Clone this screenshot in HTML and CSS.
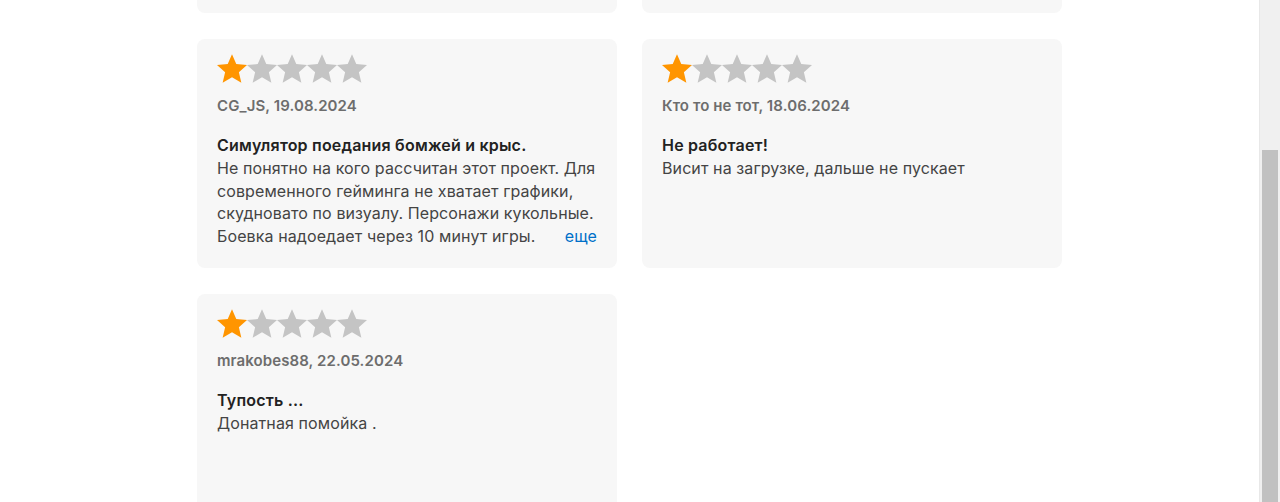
FILE: index.html
```html
<!DOCTYPE html>
<html lang="ru">
<head>
    <meta charset="UTF-8">
    <meta name="viewport" content="width=device-width, initial-scale=1.0">
    <title>Отзывы</title>
    <link rel="stylesheet" href="styles.css">
</head>
<body>

    <main class="reviews">
        <div class="review">
            <div class="stars">
                <svg class="star on" viewBox="1.1 1.5 21.8 20.8"><path d="M12 1.5l3.1 7.2 7.8.7-5.9 5.2 1.8 7.7L12 18.3l-6.8 4 1.8-7.7-5.9-5.2 7.8-.7z"/></svg>
                <svg class="star" viewBox="1.1 1.5 21.8 20.8"><path d="M12 1.5l3.1 7.2 7.8.7-5.9 5.2 1.8 7.7L12 18.3l-6.8 4 1.8-7.7-5.9-5.2 7.8-.7z"/></svg>
                <svg class="star" viewBox="1.1 1.5 21.8 20.8"><path d="M12 1.5l3.1 7.2 7.8.7-5.9 5.2 1.8 7.7L12 18.3l-6.8 4 1.8-7.7-5.9-5.2 7.8-.7z"/></svg>
                <svg class="star" viewBox="1.1 1.5 21.8 20.8"><path d="M12 1.5l3.1 7.2 7.8.7-5.9 5.2 1.8 7.7L12 18.3l-6.8 4 1.8-7.7-5.9-5.2 7.8-.7z"/></svg>
                <svg class="star" viewBox="1.1 1.5 21.8 20.8"><path d="M12 1.5l3.1 7.2 7.8.7-5.9 5.2 1.8 7.7L12 18.3l-6.8 4 1.8-7.7-5.9-5.2 7.8-.7z"/></svg>
            </div>
            <p class="author">Игрок, 02.09.2024</p>
            <h3 class="title">Неплохо</h3>
            <p class="text">Играть можно.</p>
        </div>
        <div class="review">
            <div class="stars">
                <svg class="star on" viewBox="1.1 1.5 21.8 20.8"><path d="M12 1.5l3.1 7.2 7.8.7-5.9 5.2 1.8 7.7L12 18.3l-6.8 4 1.8-7.7-5.9-5.2 7.8-.7z"/></svg>
                <svg class="star" viewBox="1.1 1.5 21.8 20.8"><path d="M12 1.5l3.1 7.2 7.8.7-5.9 5.2 1.8 7.7L12 18.3l-6.8 4 1.8-7.7-5.9-5.2 7.8-.7z"/></svg>
                <svg class="star" viewBox="1.1 1.5 21.8 20.8"><path d="M12 1.5l3.1 7.2 7.8.7-5.9 5.2 1.8 7.7L12 18.3l-6.8 4 1.8-7.7-5.9-5.2 7.8-.7z"/></svg>
                <svg class="star" viewBox="1.1 1.5 21.8 20.8"><path d="M12 1.5l3.1 7.2 7.8.7-5.9 5.2 1.8 7.7L12 18.3l-6.8 4 1.8-7.7-5.9-5.2 7.8-.7z"/></svg>
                <svg class="star" viewBox="1.1 1.5 21.8 20.8"><path d="M12 1.5l3.1 7.2 7.8.7-5.9 5.2 1.8 7.7L12 18.3l-6.8 4 1.8-7.7-5.9-5.2 7.8-.7z"/></svg>
            </div>
            <p class="author">Гость, 28.08.2024</p>
            <h3 class="title">Так себе</h3>
            <p class="text">Ожидал большего.</p>
        </div>

        <div class="review">
            <div class="stars">
                <svg class="star on" viewBox="1.1 1.5 21.8 20.8"><path d="M12 1.5l3.1 7.2 7.8.7-5.9 5.2 1.8 7.7L12 18.3l-6.8 4 1.8-7.7-5.9-5.2 7.8-.7z"/></svg>
                <svg class="star" viewBox="1.1 1.5 21.8 20.8"><path d="M12 1.5l3.1 7.2 7.8.7-5.9 5.2 1.8 7.7L12 18.3l-6.8 4 1.8-7.7-5.9-5.2 7.8-.7z"/></svg>
                <svg class="star" viewBox="1.1 1.5 21.8 20.8"><path d="M12 1.5l3.1 7.2 7.8.7-5.9 5.2 1.8 7.7L12 18.3l-6.8 4 1.8-7.7-5.9-5.2 7.8-.7z"/></svg>
                <svg class="star" viewBox="1.1 1.5 21.8 20.8"><path d="M12 1.5l3.1 7.2 7.8.7-5.9 5.2 1.8 7.7L12 18.3l-6.8 4 1.8-7.7-5.9-5.2 7.8-.7z"/></svg>
                <svg class="star" viewBox="1.1 1.5 21.8 20.8"><path d="M12 1.5l3.1 7.2 7.8.7-5.9 5.2 1.8 7.7L12 18.3l-6.8 4 1.8-7.7-5.9-5.2 7.8-.7z"/></svg>
            </div>
            <p class="author">CG_JS, 19.08.2024</p>
            <h3 class="title">Симулятор поедания бомжей и крыс.</h3>
            <p class="text">Не понятно на кого рассчитан этот проект. Для современного гейминга не хватает графики, скудновато по визуалу. Персонажи кукольные. Боевка надоедает через 10 минут игры.<a class="more" href="#">еще</a></p>
        </div>
        <div class="review">
            <div class="stars">
                <svg class="star on" viewBox="1.1 1.5 21.8 20.8"><path d="M12 1.5l3.1 7.2 7.8.7-5.9 5.2 1.8 7.7L12 18.3l-6.8 4 1.8-7.7-5.9-5.2 7.8-.7z"/></svg>
                <svg class="star" viewBox="1.1 1.5 21.8 20.8"><path d="M12 1.5l3.1 7.2 7.8.7-5.9 5.2 1.8 7.7L12 18.3l-6.8 4 1.8-7.7-5.9-5.2 7.8-.7z"/></svg>
                <svg class="star" viewBox="1.1 1.5 21.8 20.8"><path d="M12 1.5l3.1 7.2 7.8.7-5.9 5.2 1.8 7.7L12 18.3l-6.8 4 1.8-7.7-5.9-5.2 7.8-.7z"/></svg>
                <svg class="star" viewBox="1.1 1.5 21.8 20.8"><path d="M12 1.5l3.1 7.2 7.8.7-5.9 5.2 1.8 7.7L12 18.3l-6.8 4 1.8-7.7-5.9-5.2 7.8-.7z"/></svg>
                <svg class="star" viewBox="1.1 1.5 21.8 20.8"><path d="M12 1.5l3.1 7.2 7.8.7-5.9 5.2 1.8 7.7L12 18.3l-6.8 4 1.8-7.7-5.9-5.2 7.8-.7z"/></svg>
            </div>
            <p class="author">Кто то не тот, 18.06.2024</p>
            <h3 class="title">Не работает!</h3>
            <p class="text">Висит на загрузке, дальше не пускает</p>
        </div>

        <div class="review">
            <div class="stars">
                <svg class="star on" viewBox="1.1 1.5 21.8 20.8"><path d="M12 1.5l3.1 7.2 7.8.7-5.9 5.2 1.8 7.7L12 18.3l-6.8 4 1.8-7.7-5.9-5.2 7.8-.7z"/></svg>
                <svg class="star" viewBox="1.1 1.5 21.8 20.8"><path d="M12 1.5l3.1 7.2 7.8.7-5.9 5.2 1.8 7.7L12 18.3l-6.8 4 1.8-7.7-5.9-5.2 7.8-.7z"/></svg>
                <svg class="star" viewBox="1.1 1.5 21.8 20.8"><path d="M12 1.5l3.1 7.2 7.8.7-5.9 5.2 1.8 7.7L12 18.3l-6.8 4 1.8-7.7-5.9-5.2 7.8-.7z"/></svg>
                <svg class="star" viewBox="1.1 1.5 21.8 20.8"><path d="M12 1.5l3.1 7.2 7.8.7-5.9 5.2 1.8 7.7L12 18.3l-6.8 4 1.8-7.7-5.9-5.2 7.8-.7z"/></svg>
                <svg class="star" viewBox="1.1 1.5 21.8 20.8"><path d="M12 1.5l3.1 7.2 7.8.7-5.9 5.2 1.8 7.7L12 18.3l-6.8 4 1.8-7.7-5.9-5.2 7.8-.7z"/></svg>
            </div>
            <p class="author">mrakobes88, 22.05.2024</p>
            <h3 class="title">Тупость ...</h3>
            <p class="text">Донатная помойка .</p>
        </div>
    </main>

    <div class="scrollbar"><div class="thumb"></div></div>

</body>
</html>
```

FILE: styles.css
```css
html, body {
    height: 100%;
}

body {
    margin: 0;
    overflow: hidden;
    background: #fff;
    font-family: Inter, "Noto Sans", sans-serif;
    color: #333;
}

.reviews {
    width: 865px;
    margin: -216px auto 0;
    padding-right: 21px;
    display: grid;
    grid-template-columns: 420px 420px;
    grid-auto-rows: 229px;
    gap: 26px 25px;
}

.review {
    background: #f7f7f7;
    border-radius: 8px;
    padding: 15px 20px 0;
}

.stars {
    display: flex;
    height: 30px;
}

.star {
    width: 30px;
    height: 29px;
    fill: #c4c4c4;
}

.star.on {
    fill: #ff9500;
}

.author {
    margin: 12px 0 0;
    font-size: 15px;
    font-weight: 600;
    letter-spacing: 0.1px;
    color: #6d6d6d;
    line-height: 20px;
}

.title {
    margin: 18px 0 0;
    font-size: 16px;
    font-weight: 600;
    letter-spacing: 0.2px;
    color: #222;
    line-height: 23px;
}

.text {
    margin: 0;
    font-size: 16px;
    line-height: 22.5px;
    letter-spacing: 0.1px;
    color: #444;
}

.more {
    float: right;
    color: #0070c9;
    text-decoration: none;
}

.scrollbar {
    position: fixed;
    top: 0;
    right: 0;
    width: 21px;
    height: 100%;
    background: #f0f0f0;
    border-left: 1px solid #e8e8e8;
    box-sizing: border-box;
}

.thumb {
    margin: 150px 0 0 2px;
    width: 16px;
    height: 400px;
    background: #c1c1c1;
}
```
